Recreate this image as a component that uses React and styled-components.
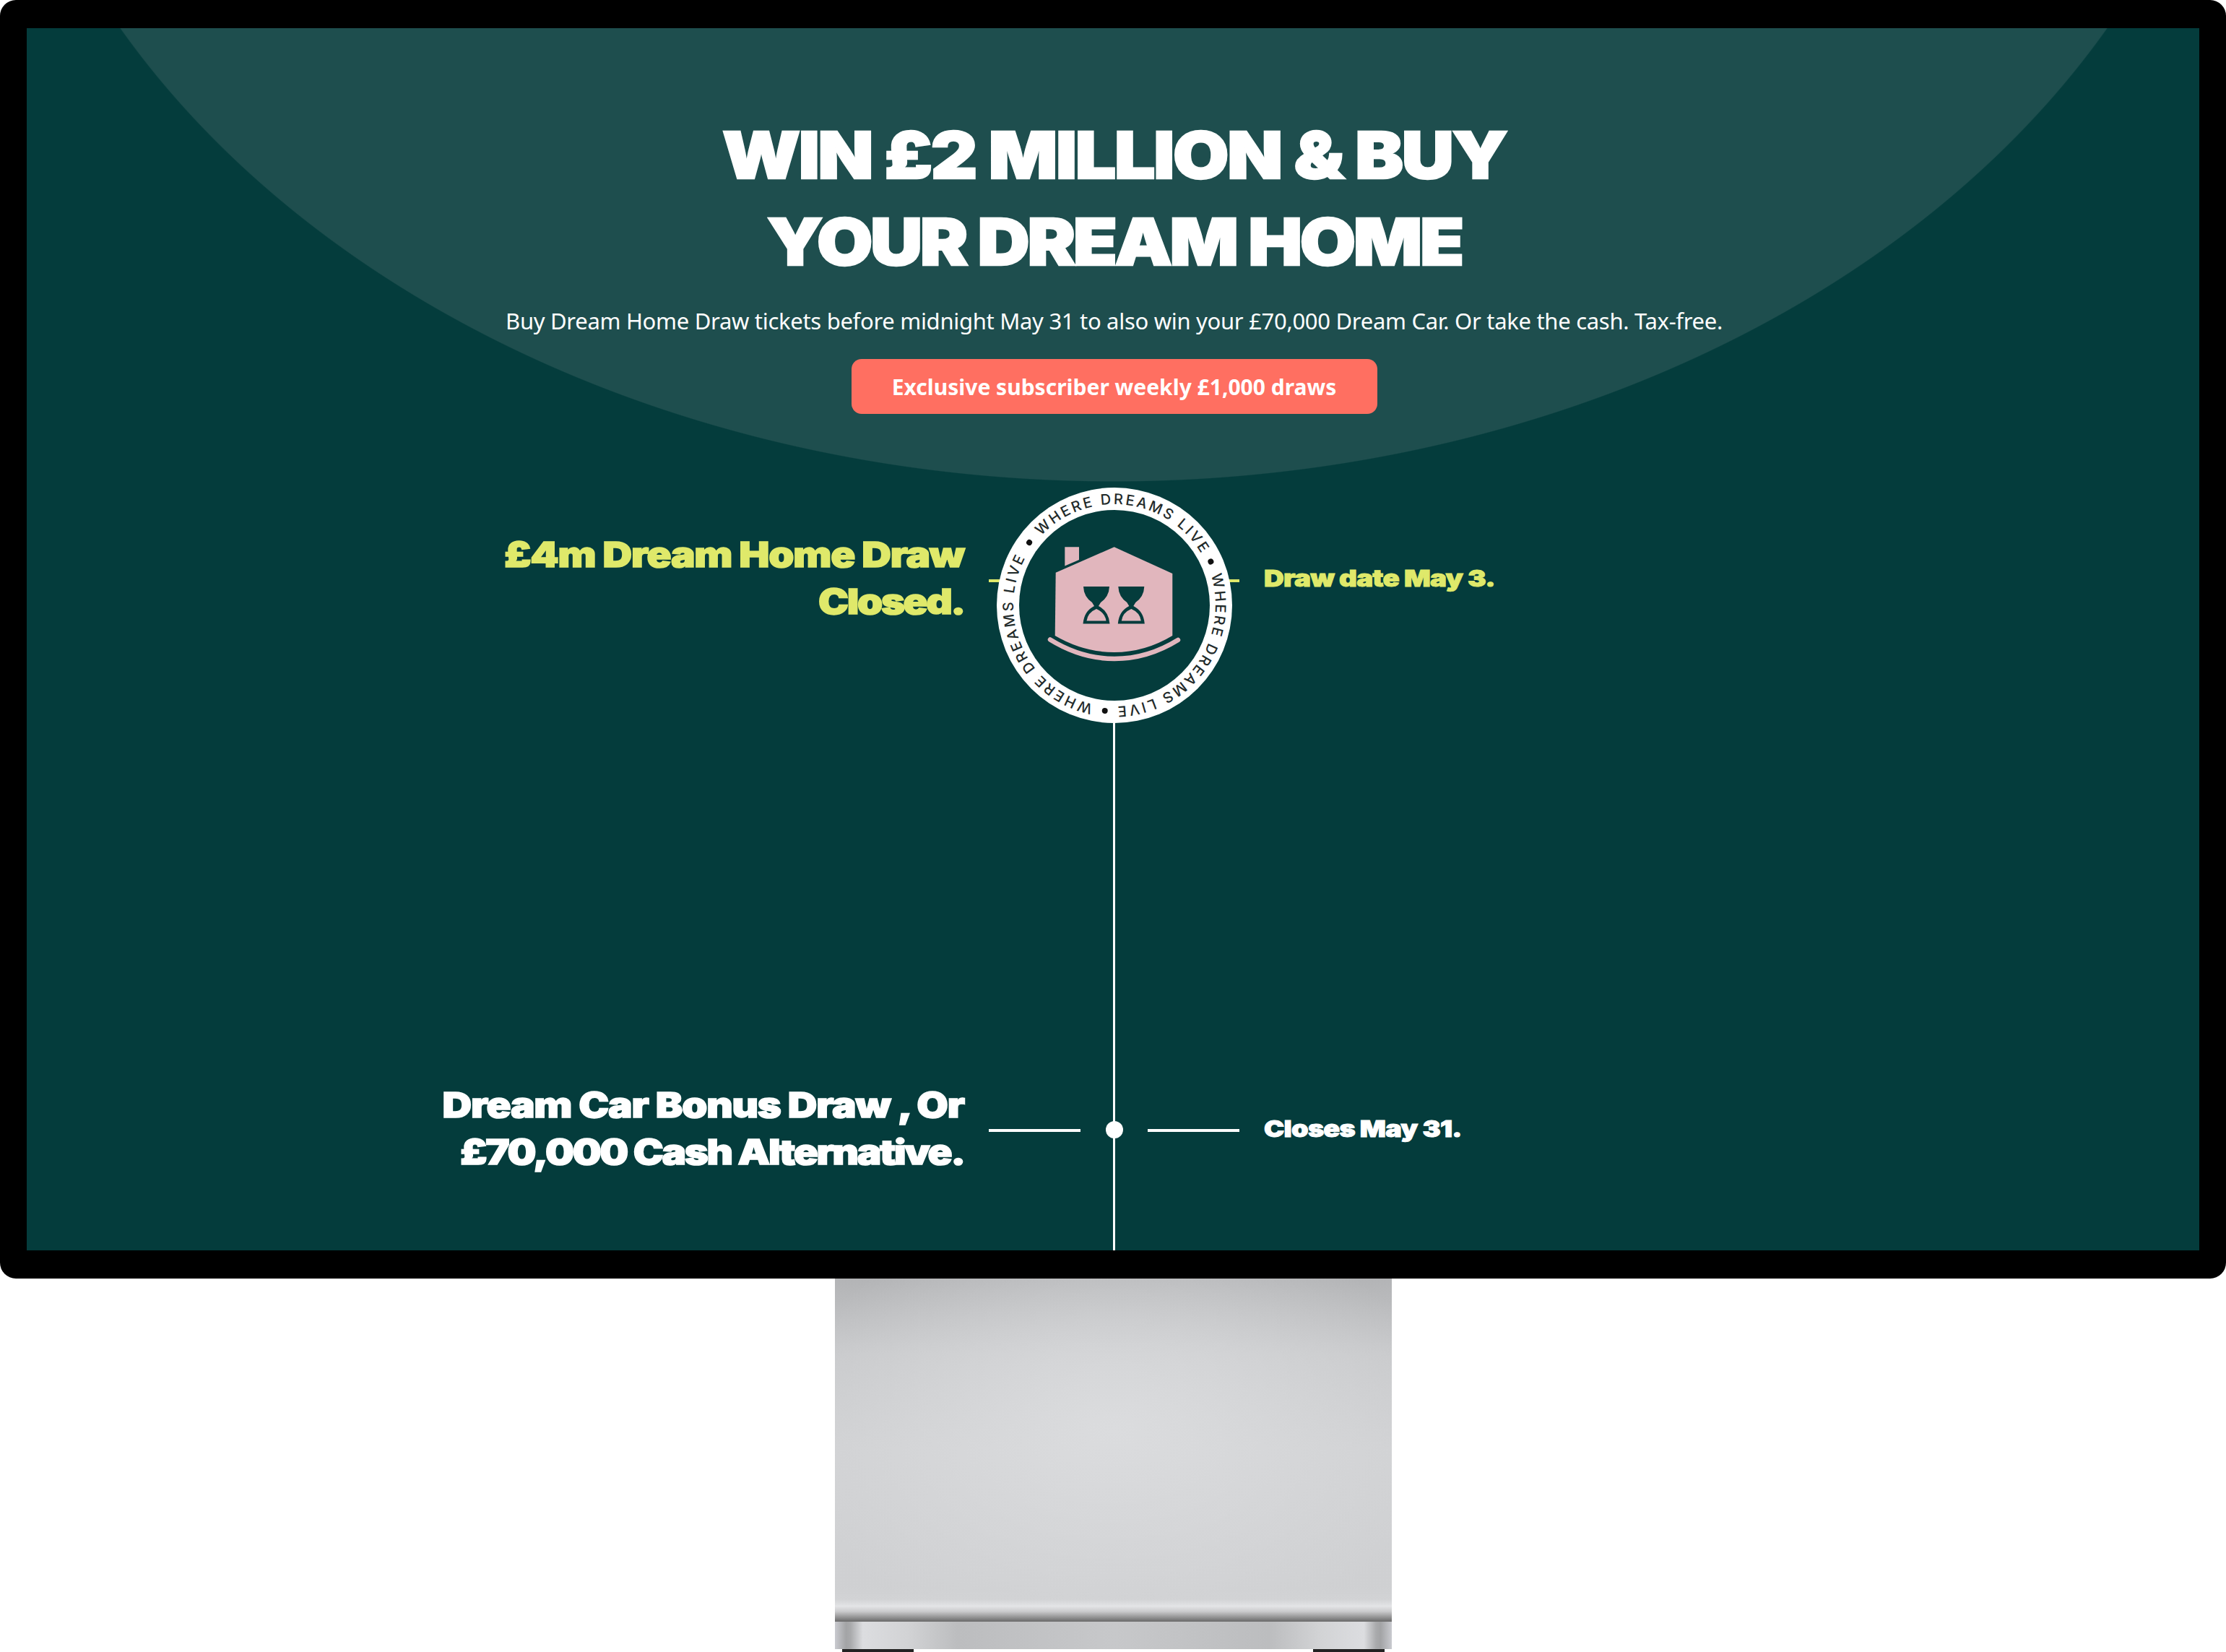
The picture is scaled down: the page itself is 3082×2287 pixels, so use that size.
import React from "react";
import styled, { createGlobalStyle } from "styled-components";

const Global = createGlobalStyle`
  html, body { margin: 0; padding: 0; background: #fff; }
  * { box-sizing: border-box; }
`;

const Page = styled.div`
  width: 3082px;
  height: 2287px;
  overflow: hidden;
  display: flex;
  flex-direction: column;
  align-items: center;
`;

const Bezel = styled.div`
  width: 100%;
  height: 1770px;
  flex: none;
  background: #000;
  border-radius: 22px;
  padding: 39px 37px;
`;

const Screen = styled.div`
  height: 100%;
  padding-left: 3px;
  display: flex;
  flex-direction: column;
  align-items: center;
  color: #fff;
  font-family: "Inter", sans-serif;
  background:
    radial-gradient(ellipse 1567px 1203px at 1505px -575px, #1e4e4e 99.9%, transparent 100%),
    #043c3c;
`;

const Heading = styled.h1`
  margin: 116px 0 0;
  font-family: "Inter", sans-serif;
  font-size: 89px;
  font-weight: 900;
  line-height: 120px;
  letter-spacing: -2px;
  text-align: center;
  transform: scaleX(1.122);
  -webkit-text-stroke: 2.5px #fff;
`;

const TightLine = styled.span`
  letter-spacing: ${(p) => p.$spacing}px;
`;

const Sub = styled.p`
  margin: 28px 0 0;
  font-family: "Noto Sans", sans-serif;
  font-size: 31px;
  line-height: 42px;
  letter-spacing: -0.3px;
  text-align: center;
`;

const Pill = styled.div`
  width: 728px;
  height: 76px;
  margin-top: 32px;
  display: flex;
  align-items: center;
  justify-content: center;
  background: #ff6f61;
  border-radius: 14px;
  font-family: "Noto Sans", sans-serif;
  font-size: 30px;
  font-weight: 700;
`;

const Timeline = styled.div`
  flex: 1;
  width: 100%;
  margin-top: 102px;
  display: grid;
  grid-template-columns: 1295px 347px 1fr;
  grid-template-rows: 826px 1fr;
  column-gap: 34px;
`;

const DrawName = styled.h2`
  margin: ${(p) => p.$top}px 0 0;
  font-family: "Inter", sans-serif;
  font-size: 48px;
  font-weight: 900;
  line-height: 65px;
  letter-spacing: -1px;
  text-align: right;
  color: ${(p) => p.$color};
  transform: scaleX(1.172);
  transform-origin: right center;
  -webkit-text-stroke: 1.5px ${(p) => p.$color};
`;

const DrawNote = styled.div`
  margin-top: ${(p) => p.$top}px;
  font-family: "Inter", sans-serif;
  font-size: 32px;
  font-weight: 900;
  line-height: 40px;
  letter-spacing: -0.6px;
  color: ${(p) => p.$color};
  transform: scaleX(${(p) => p.$stretch});
  transform-origin: left center;
  -webkit-text-stroke: 1px ${(p) => p.$color};
`;

const BadgeCell = styled.div`
  display: flex;
  flex-direction: column;
  align-items: center;
  background: linear-gradient(#dfe96a, #dfe96a) 0 127px / 100% 4px no-repeat;
`;

const Stem = styled.div`
  flex: 1;
  width: 3px;
  background: #fff;
`;

const TickRow = styled.div`
  display: flex;
  justify-content: space-between;
`;

const Tick = styled.div`
  width: 127px;
  height: 4px;
  margin-top: 62px;
  background: #fff;
`;

const DotRail = styled.div`
  width: 24px;
  background: linear-gradient(#fff, #fff) center / 3px 100% no-repeat;
`;

const Dot = styled.div`
  width: 24px;
  height: 24px;
  margin-top: 51px;
  border-radius: 50%;
  background: #fff;
`;

const Stand = styled.div`
  width: 771px;
  height: 475px;
  flex: none;
  background:
    linear-gradient(
      to bottom,
      rgba(210, 211, 213, 0) 90%,
      #d2d3d5 93.5%,
      #e3e4e6 95.5%,
      #cbcbcd 97%,
      #6a6a6a 100%
    ),
    radial-gradient(ellipse 62% 62% at 50% 44%, #dbdcde 0%, rgba(219, 220, 222, 0) 100%),
    linear-gradient(to bottom, #b3b4b6 0%, #c8c9cb 22%, #d0d1d3 50%, #cfd0d2 100%);
`;

const Base = styled.div`
  width: 771px;
  height: 38px;
  flex: none;
  background: linear-gradient(
    to right,
    #c9cacf 0,
    #a3a4a6 2%,
    #a9aaac 2.8%,
    #dcdde0 5%,
    #d2d3d5 13%,
    #bcbdbf 22%,
    #c7c8ca 50%,
    #bcbdbf 78%,
    #d2d3d5 87%,
    #dcdde0 95%,
    #a9aaac 97.2%,
    #a3a4a6 98%,
    #c9cacf 100%
  );
`;

const Feet = styled.div`
  width: 751px;
  height: 4px;
  flex: none;
  display: flex;
  justify-content: space-between;
`;

const Foot = styled.div`
  width: 99px;
  background: #222;
`;

const BadgeSvg = styled.svg`
  display: block;
  flex: none;
  width: 326px;
  height: 326px;
`;

const RingText = styled.text`
  font-family: "Inter", sans-serif;
  font-size: 20px;
  font-weight: 500;
  fill: #1f2a2a;
`;

const PINK = "#e1b6bd";
const DARK = "#043c3c";

const Hourglass = ({ x }) => (
  <g transform={`translate(${x} 0)`}>
    <path
      d="M120 137H156Q155.5 151 144 159L141 164Q155 171 156.5 188.5H119.5Q121 171 135 164L132 159Q120.5 151 120 137Z"
      fill={DARK}
    />
    <path d="M124.5 184.5Q126 173 138 168Q150 173 151.5 184.5Z" fill={PINK} />
  </g>
);

const Badge = () => (
  <BadgeSvg viewBox="0 0 326 326">
    <defs>
      <path id="ring" d="M163 23A140 140 0 1 1 162.99 23" />
    </defs>
    <circle cx="163" cy="163" r="163" fill="#fff" />
    <circle cx="163" cy="163" r="132" fill={DARK} />
    {[-53.6, 65.6, 185.2].map((a) => (
      <g key={a} transform={`rotate(${a} 163 163)`}>
        <circle cx="163" cy="16.5" r="4" fill="#111" />
        <RingText>
          <textPath href="#ring" startOffset="17" textLength="258" lengthAdjust="spacing">
            WHERE DREAMS LIVE
          </textPath>
        </RingText>
      </g>
    ))}
    <path d="M94.3 82.3H114V100L94.3 108.5Z" fill={PINK} />
    <path
      d="M162.7 82.3L243.3 119V205Q205 228 162.7 228Q120 228 80.7 205L81.7 117.7Z"
      fill={PINK}
    />
    <Hourglass x={0} />
    <Hourglass x={48.3} />
    <path
      d="M74 210.5Q117 237 163 237Q209 237 251 211"
      fill="none"
      stroke={PINK}
      strokeWidth="6.5"
      strokeLinecap="round"
    />
  </BadgeSvg>
);

export default function App() {
  return (
    <Page>
      <Global />
      <Bezel>
        <Screen>
          <Heading>
            WIN £2 MILLION &amp; BUY
            <br />
            <TightLine $spacing={-3}>YOUR DREAM HOME</TightLine>
          </Heading>
          <Sub>
            Buy Dream Home Draw tickets before midnight May 31 to also win your £70,000 Dream Car.
            Or take the cash. Tax-free.
          </Sub>
          <Pill>Exclusive subscriber weekly £1,000 draws</Pill>
          <Timeline>
            <DrawName $top={60} $color="#dfe96a">
              £4m Dream Home Draw
              <br />
              <TightLine $spacing={-2}>Closed.</TightLine>
            </DrawName>
            <BadgeCell>
              <Badge />
              <Stem />
            </BadgeCell>
            <DrawNote $top={106} $color="#dfe96a" $stretch={1.2}>
              Draw date May 3.
            </DrawNote>
            <DrawName $top={-4} $color="#fff">
              Dream Car Bonus Draw , Or
              <br />
              <TightLine $spacing={-2}>£70,000 Cash Alternative.</TightLine>
            </DrawName>
            <TickRow>
              <Tick />
              <DotRail>
                <Dot />
              </DotRail>
              <Tick />
            </TickRow>
            <DrawNote $top={42} $color="#fff" $stretch={1.18}>
              Closes May 31.
            </DrawNote>
          </Timeline>
        </Screen>
      </Bezel>
      <Stand />
      <Base />
      <Feet>
        <Foot />
        <Foot />
      </Feet>
    </Page>
  );
}
